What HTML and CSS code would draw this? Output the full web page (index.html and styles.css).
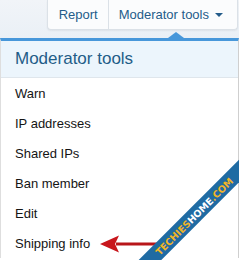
FILE: index.html
```html
<!DOCTYPE html>
<html>
<head>
<meta charset="utf-8">
<link rel="stylesheet" href="styles.css">
</head>
<body>
<div class="page">
  <div class="topbar">
    <div class="btns">
      <span class="btn">Report</span>
      <span class="btn">Moderator tools <span class="caret"></span></span>
    </div>
  </div>
  <div class="menu">
    <span class="pointer"></span>
    <div class="menu-head">Moderator tools</div>
    <ul class="items">
      <li>Warn</li>
      <li>IP addresses</li>
      <li>Shared IPs</li>
      <li>Ban member</li>
      <li>Edit</li>
      <li>Shipping info</li>
    </ul>
  </div>
  <svg class="arrow" width="60" height="20" viewBox="0 0 60 20">
    <path d="M16 8.6 L60 8.6 L60 11.4 L16 11.4 Z" fill="#b8161a"/>
    <path d="M0 10 L19 1.5 L15 10 L19 18.5 Z" fill="#c8161c"/>
  </svg>
  <div class="stamp"><span class="y">TECHIES</span><span class="w">HOME</span><span class="y">.COM</span></div>
</div>
</body>
</html>
```
FILE: styles.css
```css
html, body {
  margin: 0;
  padding: 0;
  background: #ffffff;
}
.page {
  position: relative;
  width: 239px;
  height: 260px;
  overflow: hidden;
  font-family: "Liberation Sans", Arial, sans-serif;
}
.topbar {
  height: 38px;
  background: linear-gradient(#f1f4f8, #eaf0f6);
  display: flex;
  justify-content: flex-end;
  padding-right: 1px;
}
.btns {
  display: flex;
  height: 29px;
  border: 1px solid #dbe1e7;
  border-top: none;
  border-radius: 0 0 4px 4px;
  background: #fbfcfd;
  box-shadow: 0 1px 2px rgba(0,0,0,0.06);
}
.btn {
  display: flex;
  align-items: center;
  font-size: 13px;
  color: #245c8a;
  padding: 0 10px 0 11px;
}
.btn + .btn {
  border-left: 1px solid #dbe1e7;
  padding: 0 14px 0 10px;
}
.caret {
  display: inline-block;
  margin-left: 6px;
  width: 0;
  height: 0;
  border-left: 4px solid transparent;
  border-right: 4px solid transparent;
  border-top: 4px solid #245c8a;
}
.menu {
  position: relative;
  border-top: 3px solid #4797da;
  border-left: 1px solid #dedede;
  border-right: 1px solid #cfcfcf;
}
.pointer {
  position: absolute;
  top: -9px;
  left: 167px;
  width: 0;
  height: 0;
  border-left: 8px solid transparent;
  border-right: 8px solid transparent;
  border-bottom: 6px solid #4797da;
}
.menu-head {
  height: 36px;
  display: flex;
  align-items: center;
  padding-left: 14px;
  font-size: 17px;
  color: #1f5d88;
  background: #ecf5fc;
  border-bottom: 1px solid #dfe6ec;
}
.items {
  list-style: none;
  margin: 0;
  padding: 0;
}
.items li {
  height: 30px;
  display: flex;
  align-items: center;
  padding-left: 14px;
  font-size: 13px;
  color: #141414;
}
.arrow {
  position: absolute;
  left: 100px;
  top: 234px;
}
.stamp {
  position: absolute;
  left: 104px;
  top: 208px;
  width: 180px;
  height: 16px;
  background: #1f6ba3;
  transform: rotate(-45deg);
  transform-origin: center;
  display: flex;
  align-items: center;
  justify-content: center;
  font-family: "DejaVu Sans", sans-serif;
  font-weight: bold;
  font-size: 9.5px;
  white-space: nowrap;
}
.stamp .y { color: #f2b526; }
.stamp .w { color: #ffffff; }
```
